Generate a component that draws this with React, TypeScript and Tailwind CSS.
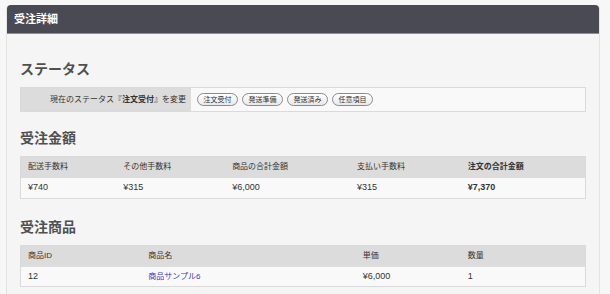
const font = '"Liberation Sans", "Noto Sans CJK JP", sans-serif';

function SectionTitle({ children }: { children: string }) {
  return <h2 className="text-[14px] font-bold text-[#505050] leading-none">{children}</h2>;
}

function StatusButton({ label }: { label: string }) {
  return (
    <button className="h-[13px] w-[41px] rounded-full border border-[#8a8a8a] bg-gradient-to-b from-white to-[#e9e9e9] text-[7px] leading-none text-[#333]">
      {label}
    </button>
  );
}

const feeCols = [96, 109, 125, 111, 125];
const feeHead = ['配送手数料', 'その他手数料', '商品の合計金額', '支払い手数料', '注文の合計金額'];
const feeVals = ['¥740', '¥315', '¥6,000', '¥315', '¥7,370'];

const itemCols = [121, 215, 105, 125];
const itemHead = ['商品ID', '商品名', '単価', '数量'];

export default function App() {
  return (
    <div className="h-[294px] w-[610px] overflow-hidden bg-[#f7f7f7] pt-[5px] pl-[6px] pr-[10px]" style={{ fontFamily: font }}>
      <div className="h-[300px] rounded-t-[4px] border-x border-[#e4e4e4] bg-[#f5f5f5]">
        <div className="flex h-[29px] items-center rounded-t-[4px] border-b border-[#8d8d94] bg-[#4a4a54] px-[7px]">
          <span className="text-[11px] font-bold text-white">受注詳細</span>
        </div>

        <div className="px-[13px] pt-[28px]">
          <SectionTitle>ステータス</SectionTitle>
          <div className="mt-[11px] flex h-[25px] border border-[#dadada] bg-[#f9f9f9]">
            <div className="flex w-[170px] items-center justify-end bg-[#dcdcdc] pr-[5px] text-[8px] text-[#333]">
              現在のステータス『<b>注文受付</b>』を変更
            </div>
            <div className="flex items-center gap-[4px] pl-[6px]">
              <StatusButton label="注文受付" />
              <StatusButton label="発送準備" />
              <StatusButton label="発送済み" />
              <StatusButton label="任意項目" />
            </div>
          </div>

          <div className="mt-[19px]">
            <SectionTitle>受注金額</SectionTitle>
          </div>
          <table className="mt-[11px] w-full border-collapse border border-[#dadada] text-[8px] text-[#333]">
            <colgroup>
              {feeCols.map((w, i) => (
                <col key={i} style={{ width: w }} />
              ))}
            </colgroup>
            <thead>
              <tr className="h-[21px] bg-[#dcdcdc]">
                {feeHead.map((h, i) => (
                  <th key={h} className={`px-[7px] text-left ${i === 4 ? 'font-bold' : 'font-normal'}`}>{h}</th>
                ))}
              </tr>
            </thead>
            <tbody>
              <tr className="h-[21px] bg-[#f9f9f9] text-[9px]">
                {feeVals.map((v, i) => (
                  <td key={i} className={`px-[7px] ${i === 4 ? 'font-bold' : ''}`}>{v}</td>
                ))}
              </tr>
            </tbody>
          </table>

          <div className="mt-[21px]">
            <SectionTitle>受注商品</SectionTitle>
          </div>
          <table className="mt-[11px] w-full border-collapse border border-[#dadada] text-[8px] text-[#333]">
            <colgroup>
              {itemCols.map((w, i) => (
                <col key={i} style={{ width: w }} />
              ))}
            </colgroup>
            <thead>
              <tr className="h-[21px] bg-[#dcdcdc]">
                {itemHead.map((h) => (
                  <th key={h} className="px-[7px] text-left font-normal">{h}</th>
                ))}
              </tr>
            </thead>
            <tbody>
              <tr className="h-[20px] bg-[#f9f9f9] text-[9px]">
                <td className="px-[7px]">12</td>
                <td className="px-[7px]">
                  <a className="text-[8px] text-[#3a3ab8]">商品サンプル6</a>
                </td>
                <td className="px-[7px]">¥6,000</td>
                <td className="px-[7px]">1</td>
              </tr>
            </tbody>
          </table>
        </div>
      </div>
    </div>
  );
}
